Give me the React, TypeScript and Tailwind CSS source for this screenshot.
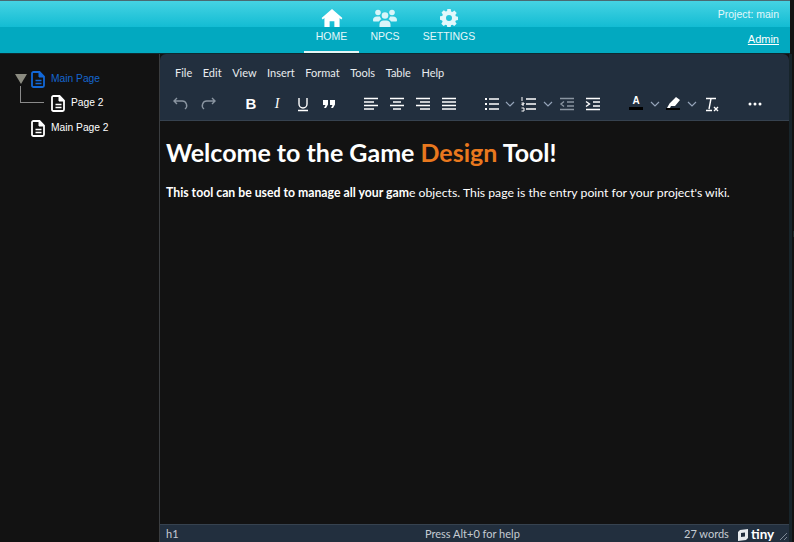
import React from "react";

const ui = { fontFamily: '"Lato","Open Sans",sans-serif' };
const arial = { fontFamily: '"Liberation Sans",sans-serif' };

function Doc({ c = "#fff" }: { c?: string }) {
  return (
    <svg width="14" height="17" viewBox="0 0 14 17" fill="none">
      <path d="M1 2.500C1 1.600 1.600 1 2.500 1H8.500L13 5.500V14.500c0 .9-.6 1.500-1.500 1.500h-9C1.600 16 1 15.400 1 14.500Z" stroke={c} strokeWidth="1.800" />
      <path d="M8 1v5h5" fill={c} stroke={c} strokeWidth="1" />
      <path d="M4.500 9.500h6M4.500 12.500h6" stroke={c} strokeWidth="1.500" />
    </svg>
  );
}

const I = ({ children }: { children: React.ReactNode }) => (
  <svg width="18" height="18" viewBox="0 0 18 18" fill="none" stroke="currentColor" strokeWidth="1.400" className="shrink-0">{children}</svg>
);

function Lines({ kind }: { kind: "l" | "c" | "r" | "j" }) {
  const short = kind === "j" ? [2, 16] : kind === "l" ? [2, 12] : kind === "c" ? [5, 13] : [6, 16];
  return (
    <I>
      <path d="M2 3.500h14" />
      <path d={`M${short[0]} 7h${short[1] - short[0]}`} />
      <path d="M2 10.500h14" />
      <path d={`M${short[0]} 14h${short[1] - short[0]}`} />
    </I>
  );
}

const Chevron = () => (
  <svg width="10" height="6" viewBox="0 0 10 6" fill="none" stroke="#94a3b8" strokeWidth="1.200" className="shrink-0"><path d="M1 1l4 4 4-4" /></svg>
);

function Nav({ label, active, icon }: { label: string; active?: boolean; icon: React.ReactNode }) {
  return (
    <div className={`flex flex-col items-center h-[52px] pt-[7px] ${active ? "border-b-2 border-[#e5f4f5]" : ""}`}>
      <div className="h-[20px] flex items-center justify-center">{icon}</div>
      <div className="text-[10.500px] leading-[13px] mt-[2px] text-[#e2f8fb] whitespace-nowrap" style={arial}>{label}</div>
    </div>
  );
}

export default function App() {
  return (
    <div className="w-[794px] h-[542px] bg-[#121212] overflow-hidden flex flex-col relative">
      <header className="w-[790px] h-[54px] shrink-0 relative bg-[linear-gradient(#45d3e3_0%,#13bcd3_50%,#02a9c0_50%,#02a9c0_100%)] border-t border-[#4a6a72] border-b border-b-[#0e2a30]" style={arial}>
        <div className="absolute left-[304px] top-0 flex">
          <div className="w-[55px]">
            <Nav active label="HOME" icon={
              <svg width="22" height="18" viewBox="0 0 22 19" fill="#fff"><path d="M11 0 0 9.500 1.200 11 3 9.500V19h5.500v-6h5v6H19V9.500l1.800 1.500L22 9.500Z" /></svg>
            } />
          </div>
          <div className="w-[52px]">
            <Nav label="NPCS" icon={
              <svg width="24" height="18" viewBox="0 0 24 18" fill="#d9f5f9"><circle cx="5" cy="3.500" r="2.800" /><circle cx="19" cy="3.500" r="2.800" /><circle cx="12" cy="6.500" r="3.300" /><path d="M0 11c0-2 1.500-3.500 4-3.500h3c.3 1.300 1 2.300 1.500 2.800-1 .4-2 1.200-2.500 2.200H1c-.6 0-1-.5-1-1.500ZM24 11c0-2-1.500-3.500-4-3.500h-3c-.3 1.300-1 2.300-1.500 2.800 1 .4 2 1.200 2.500 2.200h5c.6 0 1-.5 1-1.500ZM6.500 15.500c0-2.500 2-4 4-4h3c2 0 4 1.500 4 4V18h-11Z" /></svg>
            } />
          </div>
          <div className="w-[64px] ml-[6px]">
            <Nav label="SETTINGS" icon={
              <svg width="18" height="18" viewBox="0 0 18 18" fill="#e2f8fb"><path fillRule="evenodd" d="M7.300 0h3.400l.4 2.400 1.300.6 2-1.400 2.300 2.400-1.400 2 .6 1.300 2.100.4v3.400l-2.200.4-.5 1.300 1.300 2-2.300 2.300-2-1.300-1.300.5-.5 2.300H7.300l-.4-2.300-1.300-.5-2 1.300-2.300-2.300 1.300-2-.5-1.300L0 10.700V7.300l2.300-.4.500-1.300-1.300-2L3.800 1.300l2 1.300 1.300-.6ZM9 6a3 3 0 1 0 0 6 3 3 0 0 0 0-6Z" /></svg>
            } />
          </div>
        </div>
        <div className="absolute right-[11px] top-[7px] text-[10.500px] leading-[13px] text-[#e2f8fb]">Project: main</div>
        <div className="absolute right-[11px] top-[32px] text-[11px] leading-[13px] text-white underline">Admin</div>
      </header>
      <div className="flex-1 flex min-h-0">
        <aside className="w-[160px] shrink-0 border-r border-[#3a3d40] relative pt-[16px]" style={arial}>
          <div className="flex items-center h-[18px] pl-[15px]">
            <svg width="12" height="10" viewBox="0 0 12 10" fill="#8b8b80"><path d="M0 0h12L6 10Z" /></svg>
            <div className="ml-[4px] flex"><Doc c="#1268d8" /></div>
            <span className="ml-[6px] text-[10.250px] text-[#1566cf]">Main Page</span>
          </div>
          <div className="flex items-center h-[20px] mt-[5px] pl-[51px] relative">
            <div className="absolute left-[20px] top-[-7px] w-[24px] h-[17px] border-l border-b border-[#8a8a8a]" />
            <Doc />
            <span className="ml-[6px] text-[10.250px] text-white">Page 2</span>
          </div>
          <div className="flex items-center h-[20px] mt-[5px] pl-[31px]">
            <Doc />
            <span className="ml-[6px] text-[10.250px] text-white">Main Page 2</span>
          </div>
        </aside>
        <main className="w-[629px] shrink-0 flex flex-col rounded-t-[6px] overflow-hidden" style={ui}>
          <div className="h-[67px] shrink-0 bg-[#222f3e] border-b border-[#36424f] text-white">
            <div className="flex items-center h-[33px] pl-[15px] pt-[5px] gap-[10.500px] text-[11px] text-[#e8ecef]">
              {["File", "Edit", "View", "Insert", "Format", "Tools", "Table", "Help"].map((m) => <span key={m}>{m}</span>)}
            </div>
            <div className="flex items-center h-[33px] pl-[12px] text-white">
              <div className="flex items-center w-[70px] gap-[9px] shrink-0 text-[#8a95a1]">
                <I><path d="M5 3 2 6l3 3M2 6h8a4.500 4.500 0 0 1 3 8" /></I>
                <I><path d="M13 3l3 3-3 3M16 6H8a4.500 4.500 0 0 0-3 8" /></I>
              </div>
              <div className="flex items-center gap-[8px] w-[120px] shrink-0">
                <span className="w-[18px] text-center text-[15px] font-bold leading-none" style={arial}>B</span>
                <span className="w-[18px] text-center text-[14px] italic leading-none" style={{ fontFamily: '"Liberation Serif",serif' }}>I</span>
                <I><path d="M5 3v6a4 4 0 0 0 8 0V3M4 15.500h10" /></I>
                <svg width="18" height="18" viewBox="0 0 18 18" fill="currentColor" className="shrink-0"><path d="M3 5h5v4.500L6 13H4l1.500-3H3ZM10 5h5v4.500L13 13h-2l1.500-3H10Z" /></svg>
              </div>
              <div className="flex items-center gap-[8px] w-[121px] shrink-0">
                <Lines kind="l" /><Lines kind="c" /><Lines kind="r" /><Lines kind="j" />
              </div>
              <div className="flex items-center w-[144px] shrink-0">
                <I><path d="M6 4h10M6 9h10M6 14h10" /><path d="M2 4h2M2 9h2M2 14h2" strokeWidth="2" /></I>
                <span className="ml-[4px] mr-[5px] flex"><Chevron /></span>
                <I><path d="M6 4h10M6 9h10M6 14h10" /><path d="M2 2v4M1.500 8h2.500v1H2v1h2M1.500 13h2.500v3H1.500" strokeWidth="1" /></I>
                <span className="ml-[5px] mr-[5px] flex"><Chevron /></span>
                <span className="text-[#8a95a1] flex"><I><path d="M2 3.500h14M9 7h7M9 11h7M2 14.500h14M6 6.500 3 9l3 2.500" /></I></span>
                <span className="ml-[8px] flex"><I><path d="M2 3.500h14M9 7h7M9 11h7M2 14.500h14" /><path d="M2 6.500 5.500 9 2 11.500" /></I></span>
              </div>
              <div className="flex items-center">
                <div className="w-[18px] flex flex-col items-center relative -top-[1px]">
                  <span className="text-[10px] font-bold leading-[11px]" style={arial}>A</span>
                  <span className="w-[14px] h-[2.500px] bg-black mt-[1px]" />
                </div>
                <span className="ml-[5px] mr-[4px] flex"><Chevron /></span>
                <div className="w-[18px] flex flex-col items-center">
                  <svg width="13" height="11" viewBox="0 0 13 11" fill="#fff"><path d="M9 0l4 3-5 6H4L3 11H0l2.500-4.500Z" /></svg>
                  <span className="w-[14px] h-[2.500px] bg-black" />
                </div>
                <span className="ml-[5px] mr-[5px] flex"><Chevron /></span>
                <I><path d="M4 3.500h10M9 3.500 7 14M4 15.500h6M12 12l4 4M16 12l-4 4" /></I>
                <svg className="ml-[28px] shrink-0" width="14" height="4" viewBox="0 0 14 4" fill="#fff"><circle cx="2" cy="2" r="1.500" /><circle cx="7" cy="2" r="1.500" /><circle cx="12" cy="2" r="1.500" /></svg>
              </div>
            </div>
          </div>
          <div className="flex-1 bg-[#121212] pl-[6px] text-white">
            <h1 className="text-[25px] leading-[32px] font-bold mt-[15px] whitespace-nowrap">
              Welcome to the Game <span className="text-[#e9781e]">Design</span> Tool!
            </h1>
            <p className="text-[12.250px] leading-[16px] mt-[17px] whitespace-nowrap"><b>This tool can be used to manage all your gam</b>e objects. This page is the entry point for your project's wiki.</p>
          </div>
          <div className="h-[18px] shrink-0 bg-[#222f3e] border-t border-[#36424f] flex items-center text-[11px] text-[#c6ccd3] pl-[6px] pt-[2px] relative">
            <span>h1</span>
            <span className="absolute left-[265px]">Press Alt+0 for help</span>
            <span className="absolute left-[524px]">27 words</span>
            <span className="absolute left-[577px] flex items-center text-white">
              <svg width="12" height="12" viewBox="0 0 12 12" fill="#e8ecef"><path fillRule="evenodd" d="M3 1l8-1v9l-2 2-8 1V3Zm1 3v4l4-.500v-4Z" /></svg>
              <span className="ml-[2px] text-[13.500px] font-bold leading-none">tiny</span>
            </span>
            <svg className="absolute right-[2px] bottom-[2px]" width="8" height="8" viewBox="0 0 8 8" stroke="#7c8794" fill="none"><path d="M1 8l7-7M5 8l3-3" /></svg>
          </div>
        </main>
        <div className="flex-1 overflow-hidden pt-[175px] pl-[1px] text-[9px] leading-[10px] text-[#a5643a] border-l-[3px] border-[#17242a]" style={arial}>P</div>
      </div>
    </div>
  );
}
